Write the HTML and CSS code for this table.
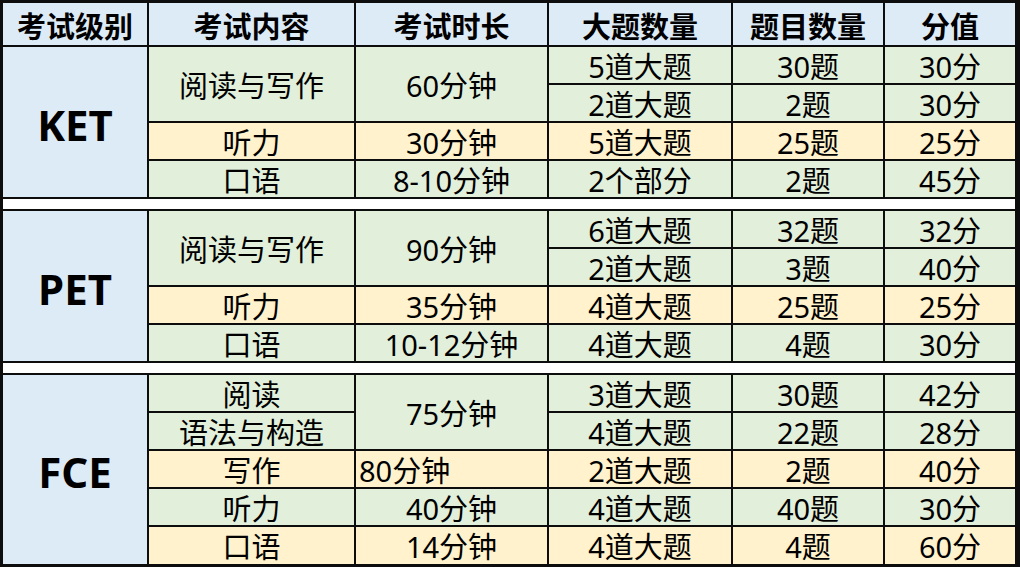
FILE: index.html
```html
<!DOCTYPE html>
<html lang="zh-CN">
<head>
<meta charset="utf-8">
<title>剑桥英语考试结构</title>
<link rel="stylesheet" href="styles.css">
</head>
<body>
<div class="sheet">
  <div class="c hd">考试级别</div>
  <div class="c hd">考试内容</div>
  <div class="c hd">考试时长</div>
  <div class="c hd">大题数量</div>
  <div class="c hd">题目数量</div>
  <div class="c hd">分值</div>

  <div class="c lvl span4">KET</div>
  <div class="c g mid span2">阅读与写作</div>
  <div class="c g mid span2">60分钟</div>
  <div class="c g">5道大题</div>
  <div class="c g">30题</div>
  <div class="c g">30分</div>
  <div class="c g">2道大题</div>
  <div class="c g">2题</div>
  <div class="c g">30分</div>
  <div class="c y">听力</div>
  <div class="c y">30分钟</div>
  <div class="c y">5道大题</div>
  <div class="c y">25题</div>
  <div class="c y">25分</div>
  <div class="c g">口语</div>
  <div class="c g">8-10分钟</div>
  <div class="c g">2个部分</div>
  <div class="c g">2题</div>
  <div class="c g">45分</div>

  <div class="sep"></div>

  <div class="c lvl span4">PET</div>
  <div class="c g mid span2">阅读与写作</div>
  <div class="c g mid span2">90分钟</div>
  <div class="c g">6道大题</div>
  <div class="c g">32题</div>
  <div class="c g">32分</div>
  <div class="c g">2道大题</div>
  <div class="c g">3题</div>
  <div class="c g">40分</div>
  <div class="c y">听力</div>
  <div class="c y">35分钟</div>
  <div class="c y">4道大题</div>
  <div class="c y">25题</div>
  <div class="c y">25分</div>
  <div class="c g">口语</div>
  <div class="c g">10-12分钟</div>
  <div class="c g">4道大题</div>
  <div class="c g">4题</div>
  <div class="c g">30分</div>

  <div class="sep"></div>

  <div class="c lvl span5">FCE</div>
  <div class="c g">阅读</div>
  <div class="c g mid span2">75分钟</div>
  <div class="c g">3道大题</div>
  <div class="c g">30题</div>
  <div class="c g">42分</div>
  <div class="c g">语法与构造</div>
  <div class="c g">4道大题</div>
  <div class="c g">22题</div>
  <div class="c g">28分</div>
  <div class="c y">写作</div>
  <div class="c y left">80分钟</div>
  <div class="c y">2道大题</div>
  <div class="c y">2题</div>
  <div class="c y">40分</div>
  <div class="c g">听力</div>
  <div class="c g">40分钟</div>
  <div class="c g">4道大题</div>
  <div class="c g">40题</div>
  <div class="c g">30分</div>
  <div class="c y">口语</div>
  <div class="c y">14分钟</div>
  <div class="c y">4道大题</div>
  <div class="c y">4题</div>
  <div class="c y">60分</div>
</div>
</body>
</html>
```

FILE: styles.css
```css
html, body {
  margin: 0;
  padding: 0;
  background: #0d0d0d;
}

.sheet {
  width: 1020px;
  height: 567px;
  box-sizing: border-box;
  padding: 3px 5px 3px 3px;
  background: #0d0d0d;
  display: grid;
  grid-template-columns: 144px 205px 191px 182px 150px 130px;
  grid-template-rows: 42px repeat(4, 36px) 10px repeat(4, 36px) 10px repeat(4, 36px) 37px;
  gap: 2px;
  font-family: "Noto Sans", "Noto Sans CJK SC", sans-serif;
  color: #000;
}

.c {
  display: flex;
  justify-content: center;
  align-items: flex-start;
  font-size: 29px;
  line-height: 33px;
  padding-top: 3px;
  box-sizing: border-box;
  white-space: nowrap;
}

.hd {
  background: #ddebf7;
  font-weight: 700;
  line-height: 37px;
  padding-top: 5px;
}

.g { background: #e2efda; }
.y { background: #fff2cc; }

.lvl {
  background: #ddebf7;
  font-weight: 700;
  font-size: 42px;
  line-height: 57px;
  align-items: center;
  padding-top: 4px;
}

.mid {
  align-items: center;
  padding-top: 3px;
}

.left {
  justify-content: flex-start;
  padding-left: 3px;
}

.span2 { grid-row: span 2; }
.span4 { grid-row: span 4; }
.span5 { grid-row: span 5; }

.sep {
  grid-column: 1 / -1;
  background: #ffffff;
}
```
